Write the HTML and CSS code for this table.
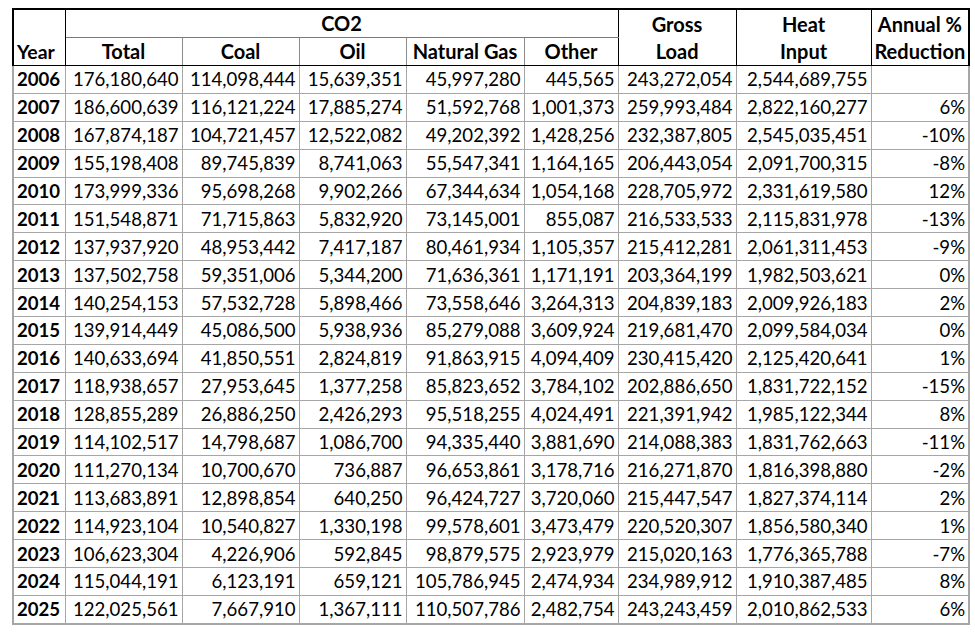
FILE: index.html
```html
<!DOCTYPE html>
<html>
<head>
<meta charset="utf-8">
<link rel="stylesheet" href="styles.css">
</head>
<body>
<div class="wrap">
<table class="grid">
<colgroup>
<col class="c-year"><col class="c-total"><col class="c-coal"><col class="c-oil"><col class="c-gas"><col class="c-other"><col class="c-load"><col class="c-heat"><col class="c-pct">
</colgroup>
<thead>
<tr class="h1">
<th rowspan="2" class="hy">Year</th>
<th colspan="5" class="hco2">CO2</th>
<th rowspan="2" class="hs">Gross<br>Load</th>
<th rowspan="2" class="hs">Heat<br>Input</th>
<th rowspan="2" class="hs hlast">Annual %<br>Reduction</th>
</tr>
<tr class="h2">
<th class="hsub hfirst">Total</th>
<th class="hsub">Coal</th>
<th class="hsub">Oil</th>
<th class="hsub">Natural Gas</th>
<th class="hsub hend">Other</th>
</tr>
</thead>
<tbody>
<tr><td class="yr">2006</td><td>176,180,640</td><td>114,098,444</td><td>15,639,351</td><td>45,997,280</td><td>445,565</td><td>243,272,054</td><td>2,544,689,755</td><td class="pct"></td></tr>
<tr><td class="yr">2007</td><td>186,600,639</td><td>116,121,224</td><td>17,885,274</td><td>51,592,768</td><td>1,001,373</td><td>259,993,484</td><td>2,822,160,277</td><td class="pct">6%</td></tr>
<tr><td class="yr">2008</td><td>167,874,187</td><td>104,721,457</td><td>12,522,082</td><td>49,202,392</td><td>1,428,256</td><td>232,387,805</td><td>2,545,035,451</td><td class="pct">-10%</td></tr>
<tr><td class="yr">2009</td><td>155,198,408</td><td>89,745,839</td><td>8,741,063</td><td>55,547,341</td><td>1,164,165</td><td>206,443,054</td><td>2,091,700,315</td><td class="pct">-8%</td></tr>
<tr><td class="yr">2010</td><td>173,999,336</td><td>95,698,268</td><td>9,902,266</td><td>67,344,634</td><td>1,054,168</td><td>228,705,972</td><td>2,331,619,580</td><td class="pct">12%</td></tr>
<tr><td class="yr">2011</td><td>151,548,871</td><td>71,715,863</td><td>5,832,920</td><td>73,145,001</td><td>855,087</td><td>216,533,533</td><td>2,115,831,978</td><td class="pct">-13%</td></tr>
<tr><td class="yr">2012</td><td>137,937,920</td><td>48,953,442</td><td>7,417,187</td><td>80,461,934</td><td>1,105,357</td><td>215,412,281</td><td>2,061,311,453</td><td class="pct">-9%</td></tr>
<tr><td class="yr">2013</td><td>137,502,758</td><td>59,351,006</td><td>5,344,200</td><td>71,636,361</td><td>1,171,191</td><td>203,364,199</td><td>1,982,503,621</td><td class="pct">0%</td></tr>
<tr><td class="yr">2014</td><td>140,254,153</td><td>57,532,728</td><td>5,898,466</td><td>73,558,646</td><td>3,264,313</td><td>204,839,183</td><td>2,009,926,183</td><td class="pct">2%</td></tr>
<tr><td class="yr">2015</td><td>139,914,449</td><td>45,086,500</td><td>5,938,936</td><td>85,279,088</td><td>3,609,924</td><td>219,681,470</td><td>2,099,584,034</td><td class="pct">0%</td></tr>
<tr><td class="yr">2016</td><td>140,633,694</td><td>41,850,551</td><td>2,824,819</td><td>91,863,915</td><td>4,094,409</td><td>230,415,420</td><td>2,125,420,641</td><td class="pct">1%</td></tr>
<tr><td class="yr">2017</td><td>118,938,657</td><td>27,953,645</td><td>1,377,258</td><td>85,823,652</td><td>3,784,102</td><td>202,886,650</td><td>1,831,722,152</td><td class="pct">-15%</td></tr>
<tr><td class="yr">2018</td><td>128,855,289</td><td>26,886,250</td><td>2,426,293</td><td>95,518,255</td><td>4,024,491</td><td>221,391,942</td><td>1,985,122,344</td><td class="pct">8%</td></tr>
<tr><td class="yr">2019</td><td>114,102,517</td><td>14,798,687</td><td>1,086,700</td><td>94,335,440</td><td>3,881,690</td><td>214,088,383</td><td>1,831,762,663</td><td class="pct">-11%</td></tr>
<tr><td class="yr">2020</td><td>111,270,134</td><td>10,700,670</td><td>736,887</td><td>96,653,861</td><td>3,178,716</td><td>216,271,870</td><td>1,816,398,880</td><td class="pct">-2%</td></tr>
<tr><td class="yr">2021</td><td>113,683,891</td><td>12,898,854</td><td>640,250</td><td>96,424,727</td><td>3,720,060</td><td>215,447,547</td><td>1,827,374,114</td><td class="pct">2%</td></tr>
<tr><td class="yr">2022</td><td>114,923,104</td><td>10,540,827</td><td>1,330,198</td><td>99,578,601</td><td>3,473,479</td><td>220,520,307</td><td>1,856,580,340</td><td class="pct">1%</td></tr>
<tr><td class="yr">2023</td><td>106,623,304</td><td>4,226,906</td><td>592,845</td><td>98,879,575</td><td>2,923,979</td><td>215,020,163</td><td>1,776,365,788</td><td class="pct">-7%</td></tr>
<tr><td class="yr">2024</td><td>115,044,191</td><td>6,123,191</td><td>659,121</td><td>105,786,945</td><td>2,474,934</td><td>234,989,912</td><td>1,910,387,485</td><td class="pct">8%</td></tr>
<tr class="last"><td class="yr">2025</td><td>122,025,561</td><td>7,667,910</td><td>1,367,111</td><td>110,507,786</td><td>2,482,754</td><td>243,243,459</td><td>2,010,862,533</td><td class="pct">6%</td></tr>
</tbody>
</table>
</div>
</body>
</html>
```

FILE: styles.css
```css
html, body {
  margin: 0;
  padding: 0;
  background: #ffffff;
}

.wrap {
  padding: 8px 0 0 12px;
}

.grid {
  border-collapse: collapse;
  table-layout: fixed;
  width: 956px;
  font-family: Lato, "Open Sans", sans-serif;
  font-size: 18.6px;
  color: #000;
}

.c-year { width: 52px; }
.c-total { width: 117px; }
.c-coal { width: 117px; }
.c-oil { width: 107px; }
.c-gas { width: 118px; }
.c-other { width: 94px; }
.c-load { width: 118px; }
.c-heat { width: 135px; }
.c-pct { width: 98px; }

.grid th {
  font-weight: 700;
  font-size: 20px;
  border: 1px solid #000;
  padding: 0 2px;
  line-height: 27px;
  height: 26px;
  text-align: center;
  vertical-align: middle;
  white-space: nowrap;
}

.h1 th { border-top: 2px solid #000; }

.grid th.hs {
  vertical-align: top;
  padding-top: 1px;
}

.grid th.hy {
  text-align: left;
  vertical-align: bottom;
  border-left: 2px solid #000;
  padding-left: 3px;
  font-size: 19.4px;
}

.grid th.hco2 {
  border-bottom: 1px solid #7a7a7a;
}

.grid th.hsub {
  border-left: 1px solid #8c8c8c;
  border-right: 1px solid #8c8c8c;
  border-top: 1px solid #7a7a7a;
  border-bottom: 1px solid #000;
}

.grid th.hfirst { border-left: 1px solid #000; }
.grid th.hend { border-right: 1px solid #000; }
.grid th.hlast { border-right: 2px solid #000; }

.grid td {
  border: 1px solid #a6a6a6;
  padding: 0 3px 0 2px;
  text-align: right;
  vertical-align: middle;
  white-space: nowrap;
  height: 26.9px;
  line-height: 26px;
}

.grid td.yr {
  font-weight: 700;
  text-align: left;
  padding-left: 3px;
  border-left: 2px solid #a6a6a6;
}

.grid td.pct {
  border-right: 2px solid #a6a6a6;
}

.grid tr.last td {
  border-bottom: 2px solid #a6a6a6;
}

.grid tbody tr:first-child td {
  border-top: 1px solid #000;
}
```
